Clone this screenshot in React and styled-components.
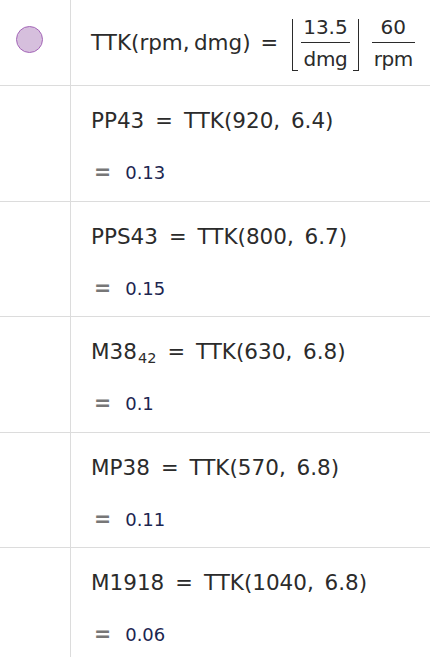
import React from "react";
import styled, { createGlobalStyle } from "styled-components";

const Global = createGlobalStyle`
  html, body { margin: 0; padding: 0; background: #fff; }
  body { font-family: "DejaVu Sans", "Noto Sans", sans-serif; color: #333; }
`;

const View = styled.div`
  width: 430px;
  height: 657px;
  overflow: hidden;
  background: #fff;
`;

const Row = styled.div`
  display: grid;
  grid-template-columns: 71px 1fr;
  height: ${(p) => p.$h}px;
  border-bottom: 1px solid #dcdcdc;
  box-sizing: border-box;
`;

const Marble = styled.div`
  border-right: 1px solid #dcdcdc;
  display: flex;
  justify-content: center;
  padding-top: ${(p) => p.$top || 0}px;
  box-sizing: border-box;
`;

const Dot = styled.div`
  width: 25px;
  height: 25px;
  border-radius: 50%;
  background: #d6bfdd;
  border: 1.5px solid #a466b8;
  margin-left: -11px;
`;

const Body = styled.div`
  display: flex;
  flex-direction: column;
  padding-left: 20px;
  padding-top: ${(p) => p.$top}px;
`;

const Line = styled.div`
  font-size: 21.5px;
  line-height: 28px;
  color: #2b2b2b;
  white-space: nowrap;
  display: flex;
  align-items: baseline;
`;

const Eq = styled.span`
  font-size: 21px;
  margin: 0 ${(p) => p.$mr ?? 11}px 0 ${(p) => p.$ml ?? 11}px;
`;

const Sub = styled.sub`
  font-size: 14.5px;
  vertical-align: -4px;
  line-height: 0;
  margin-left: 1px;
`;

const Output = styled.div`
  display: flex;
  align-items: baseline;
  margin-top: ${(p) => p.$gap}px;
  font-size: 18px;
  line-height: 28px;
`;

const OutEq = styled.span`
  color: #777;
  font-weight: 700;
  font-size: 20.5px;
  margin-left: 3px;
  margin-right: 14px;
`;

const OutVal = styled.span`
  color: #1b2650;
`;

const Formula = styled.div`
  display: flex;
  align-items: center;
  font-size: 21.5px;
  color: #2b2b2b;
  white-space: nowrap;
  height: 85px;
`;

const Floor = styled.span`
  display: inline-block;
  width: 5px;
  height: 51px;
  border-bottom: 1.5px solid #2b2b2b;
  ${(p) => (p.$side === "left" ? "border-left: 1.5px solid #2b2b2b;" : "border-right: 1.5px solid #2b2b2b;")}
  margin-top: 4px;
`;

const Frac = styled.span`
  display: inline-flex;
  flex-direction: column;
  align-items: center;
  font-size: 20px;
  margin: 0 ${(p) => p.$mr ?? 3}px 0 ${(p) => p.$ml ?? 3}px;
`;

const Num = styled.span`
  line-height: 24px;
  padding: 0 2px 3px;
  border-bottom: 1.5px solid #2b2b2b;
  align-self: stretch;
  text-align: center;
`;

const Den = styled.span`
  line-height: 24px;
  padding: 4px 2px 0;
  letter-spacing: -0.4px;
`;

const entries = [
  { name: "PP43", args: "920, 6.4", val: "0.13", h: 116 },
  { name: "PPS43", args: "800, 6.7", val: "0.15", h: 115 },
  { name: "M38", sub: "42", args: "630, 6.8", val: "0.1", h: 116 },
  { name: "MP38", args: "570, 6.8", val: "0.11", h: 115 },
  { name: "M1918", args: "1040, 6.8", val: "0.06", h: 116 },
];

export default function App() {
  return (
    <View>
      <Global />
      <Row $h={86}>
        <Marble $top={26}>
          <Dot />
        </Marble>
        <Body $top={0}>
          <Formula>
            <span>TTK(rpm,&thinsp;dmg)</span>
            <Eq $ml={10} $mr={14}>=</Eq>
            <Floor $side="left" />
            <Frac>
              <Num>13.5</Num>
              <Den>dmg</Den>
            </Frac>
            <Floor $side="right" />
            <Frac $ml={13} $mr={0}>
              <Num>60</Num>
              <Den>rpm</Den>
            </Frac>
          </Formula>
        </Body>
      </Row>
      {entries.map((e) => (
        <Row key={e.name} $h={e.h}>
          <Marble />
          <Body $top={21}>
            <Line>
              <span>
                {e.name}
                {e.sub && <Sub>{e.sub}</Sub>}
              </span>
              <Eq>=</Eq>
              <span>TTK({e.args.replace(", ", ",\u2002")})</span>
            </Line>
            <Output $gap={23}>
              <OutEq>=</OutEq>
              <OutVal>{e.val}</OutVal>
            </Output>
          </Body>
        </Row>
      ))}
    </View>
  );
}
